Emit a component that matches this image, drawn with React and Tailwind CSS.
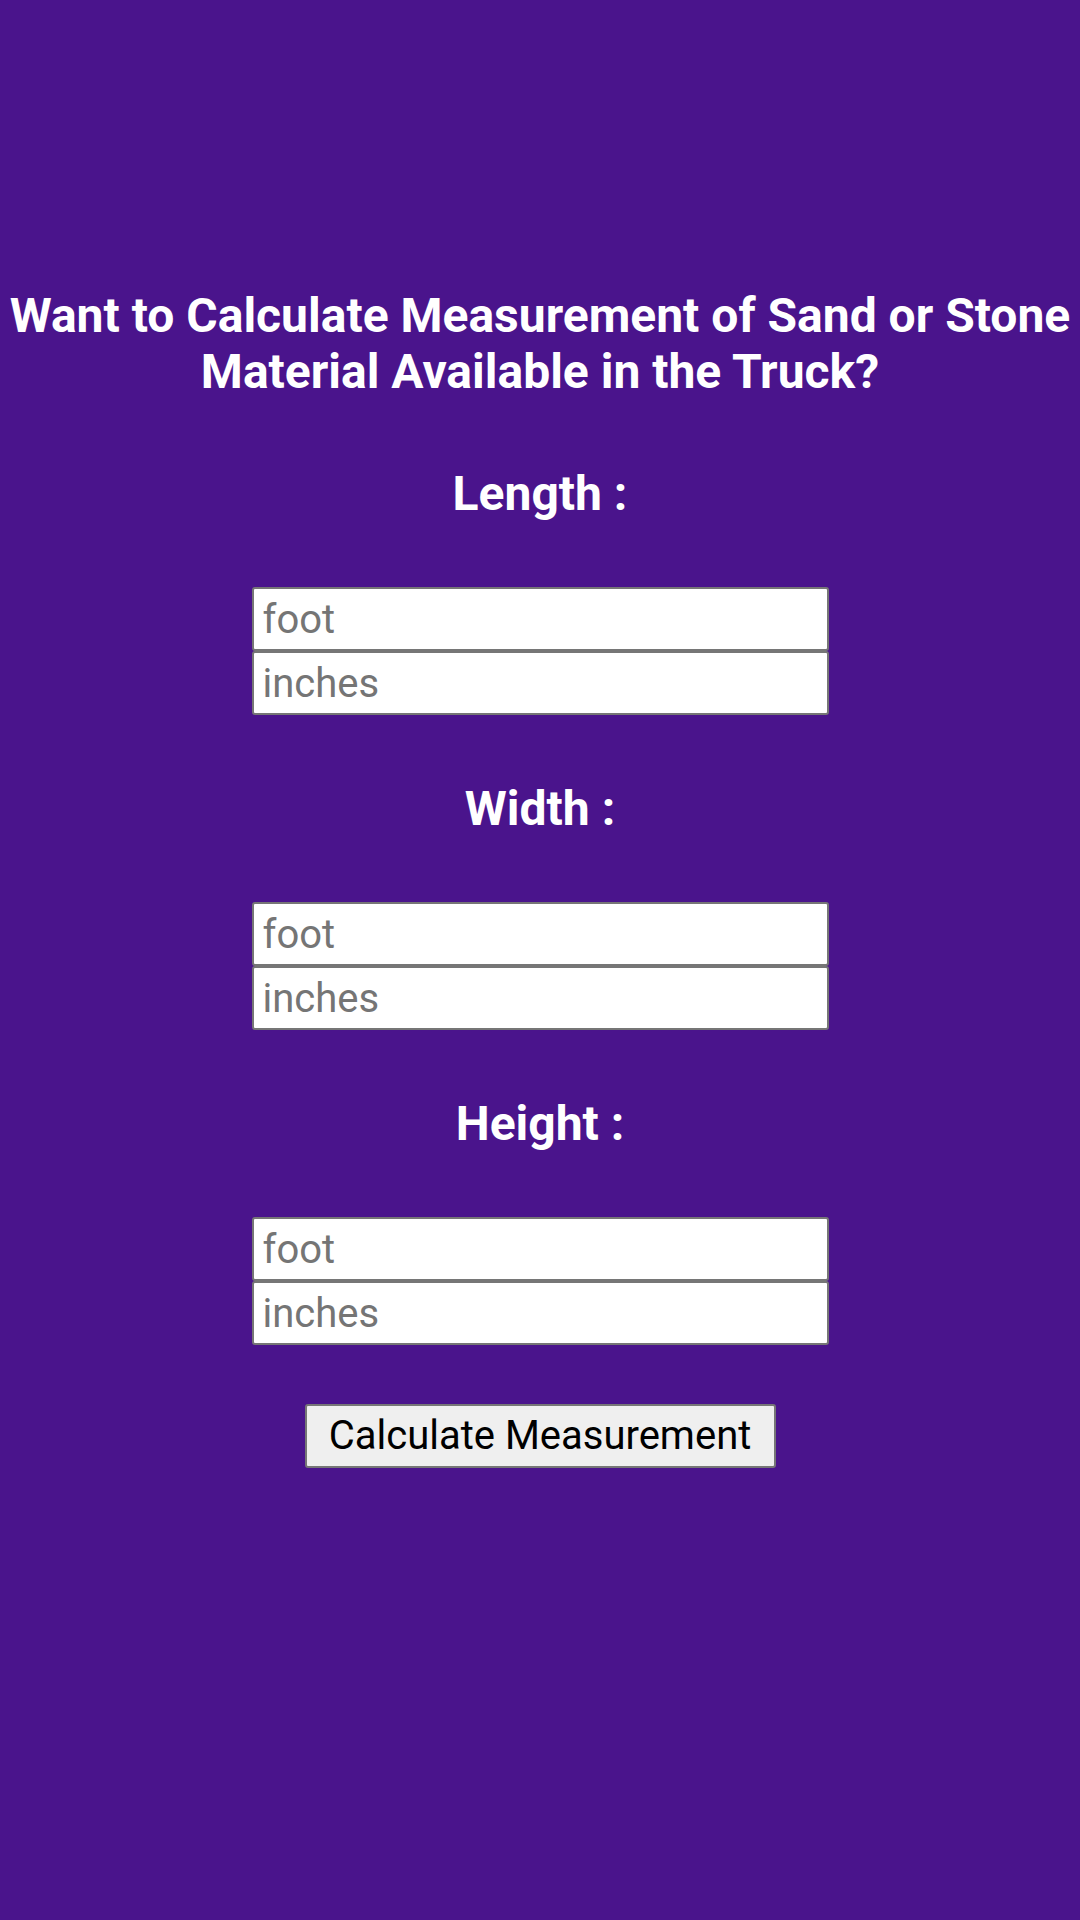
import { useState } from 'react';

const sections = ['Length', 'Width', 'Height'];

function DimensionGroup({ label, values, onChange }) {
  return (
    <div className="flex flex-col items-center">
      <h2 className="mt-[66px] text-[48px] font-bold leading-[56px] text-white">{label} :</h2>
      <div className="mt-[65px] flex flex-col">
        <input
          type="number"
          placeholder="foot"
          value={values.foot}
          onChange={(e) => onChange('foot', e.target.value)}
          className="h-[64px] w-[577px] rounded-[3px] border-2 border-[#767676] bg-white px-[9px] text-[40px] text-black outline-none placeholder:text-[#757575]"
        />
        <input
          type="number"
          placeholder="inches"
          value={values.inches}
          onChange={(e) => onChange('inches', e.target.value)}
          className="h-[64px] w-[577px] rounded-[3px] border-2 border-[#767676] bg-white px-[9px] text-[40px] text-black outline-none placeholder:text-[#757575]"
        />
      </div>
    </div>
  );
}

export default function App() {
  const [dims, setDims] = useState({
    Length: { foot: '', inches: '' },
    Width: { foot: '', inches: '' },
    Height: { foot: '', inches: '' },
  });

  const update = (section, field, value) => {
    setDims((prev) => ({ ...prev, [section]: { ...prev[section], [field]: value } }));
  };

  return (
    <div className="flex min-h-[1920px] w-full flex-col items-center bg-[#4a148c] font-['Roboto',sans-serif]">
      <h1 className="mt-[288px] text-center text-[48px] font-bold leading-[56px] text-white">
        Want to Calculate Measurement of Sand or Stone
        <br />
        Material Available in the Truck?
      </h1>

      {sections.map((s) => (
        <DimensionGroup key={s} label={s} values={dims[s]} onChange={(f, v) => update(s, f, v)} />
      ))}

      <button
        type="button"
        className="mt-[59px] h-[64px] w-[471px] rounded-[3px] border-2 border-[#767676] bg-[#efefef] text-[40px] leading-none text-black"
      >
        Calculate Measurement
      </button>
    </div>
  );
}
